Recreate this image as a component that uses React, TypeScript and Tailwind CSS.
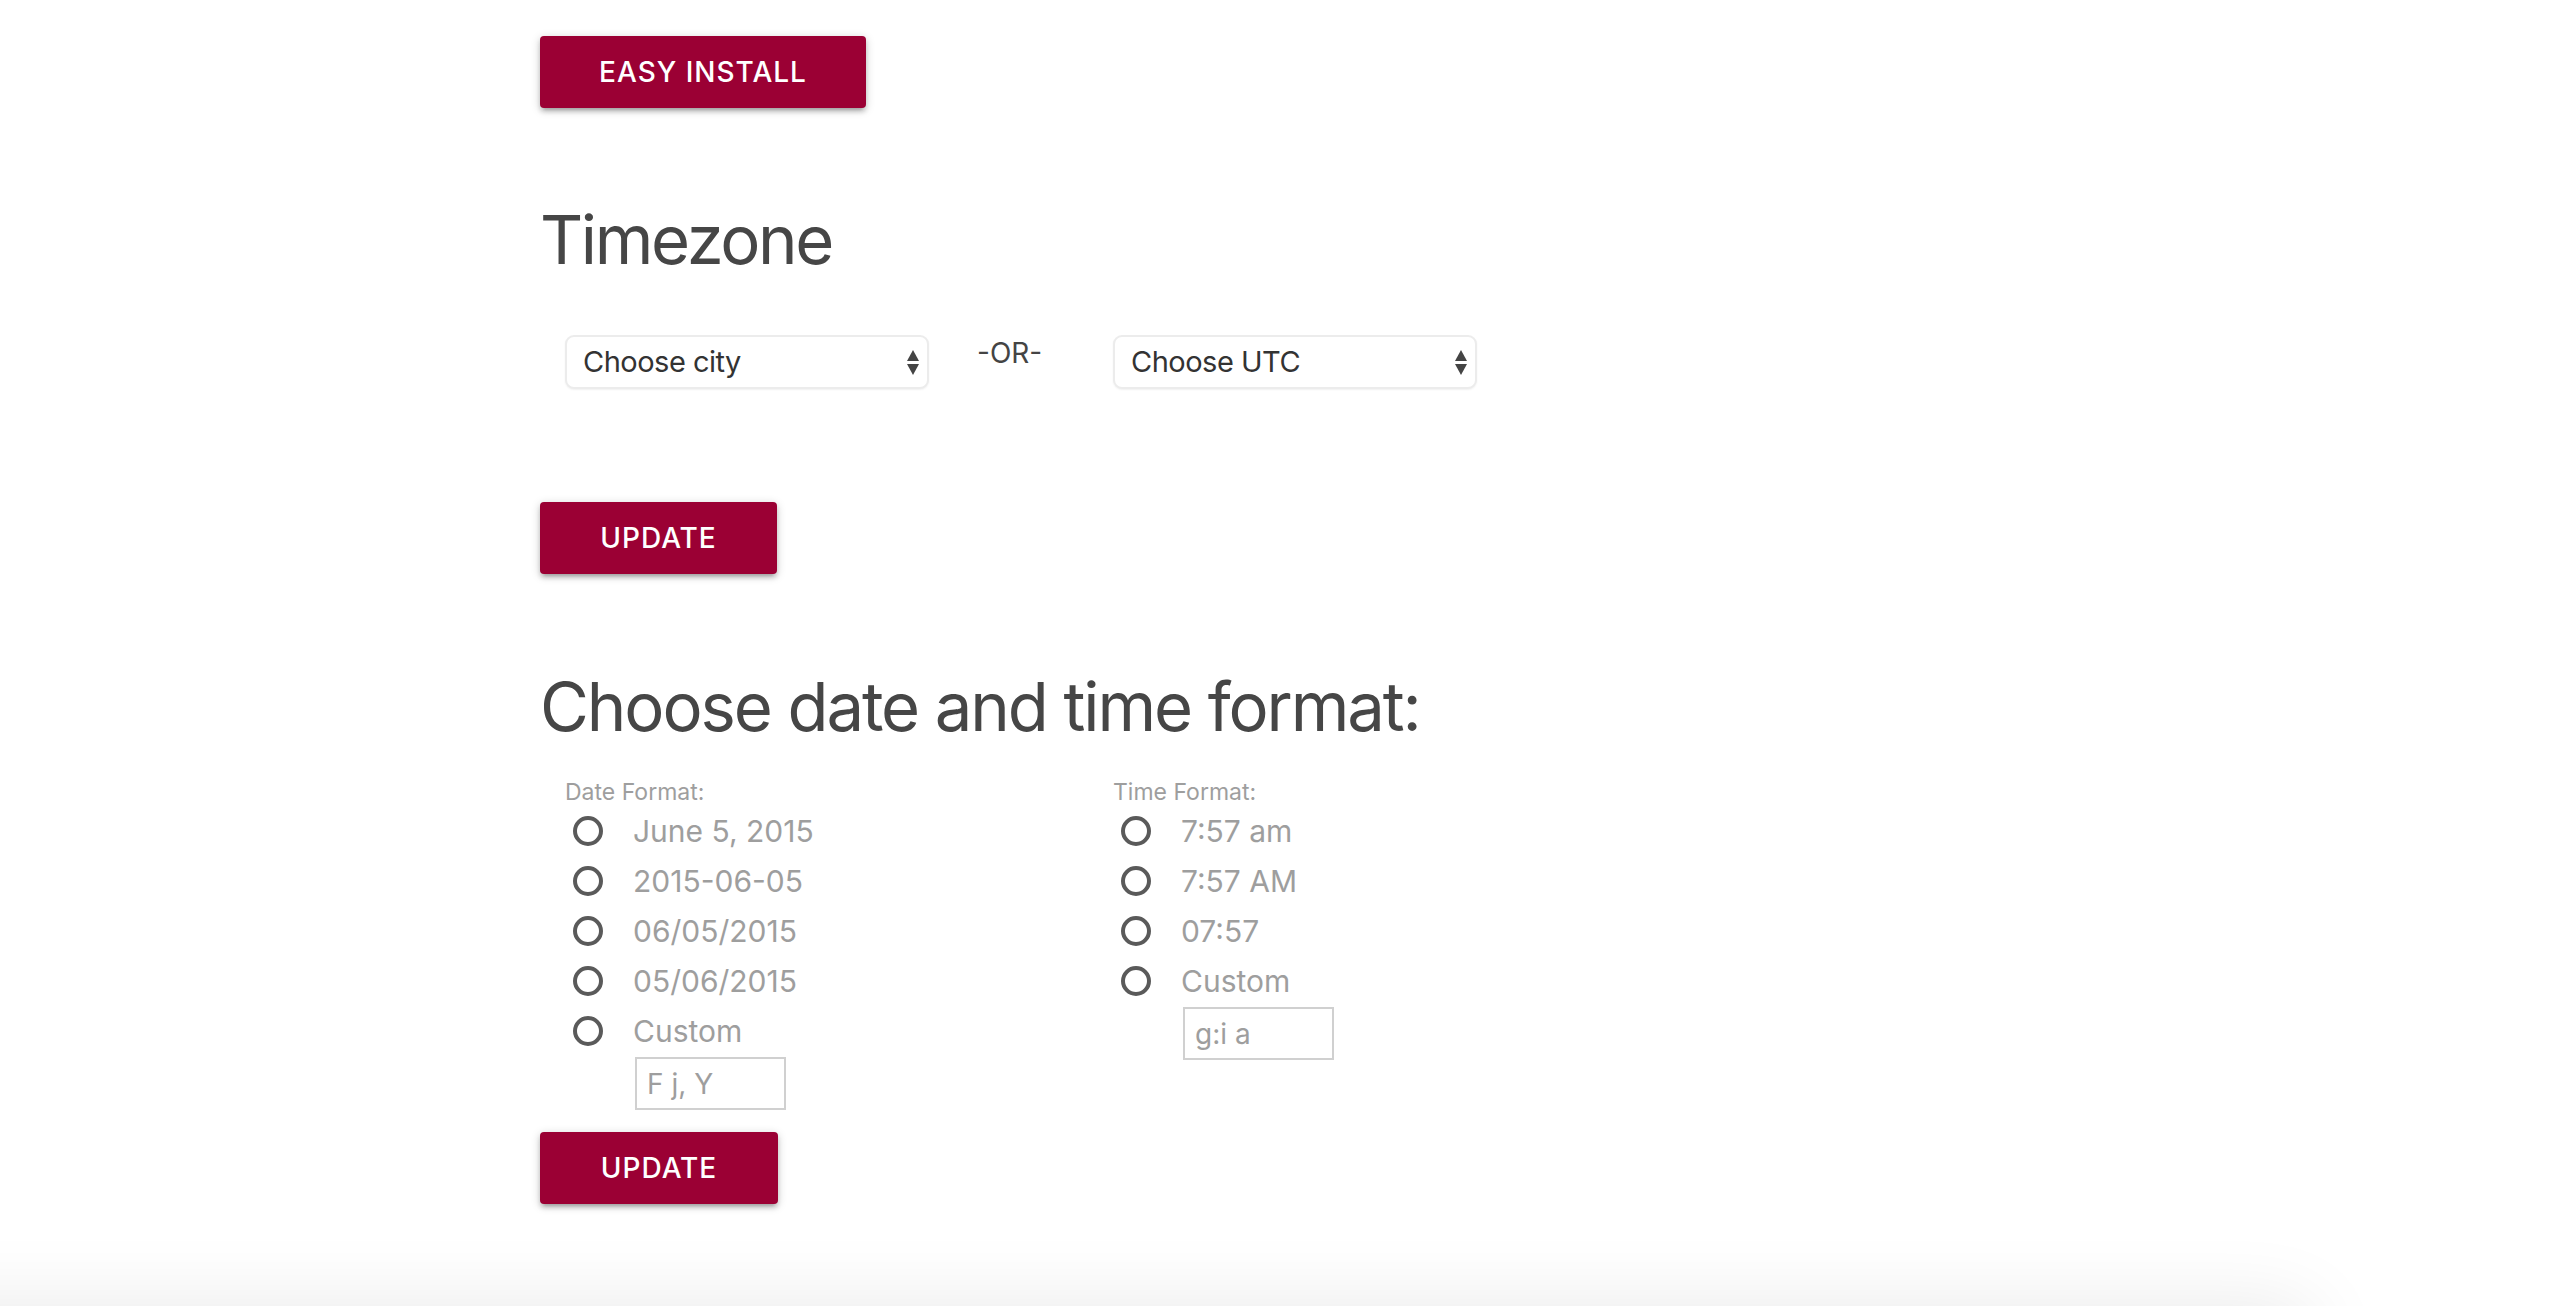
import React from "react";

function Arrows() {
  return (
    <svg width="12" height="25" viewBox="0 0 12 25" className="shrink-0">
      <polygon points="6,0 12,11 0,11" fill="#444" />
      <polygon points="0,14 12,14 6,25" fill="#444" />
    </svg>
  );
}

function FakeSelect({ label }: { label: string }) {
  return (
    <div className="flex h-[54px] w-[364px] items-center justify-between rounded-[9px] border-2 border-[#ececec] bg-white pl-[16px] pr-[8px] shadow-[0_1px_2px_rgba(0,0,0,0.06)]">
      <span className="text-[29px] leading-[36px] tracking-[-0.5px] text-[#333]">{label}</span>
      <Arrows />
    </div>
  );
}

function Radio({ label }: { label: string }) {
  return (
    <label className="flex h-[50px] items-center">
      <span className="ml-[8px] h-[30px] w-[30px] shrink-0 rounded-full border-[4px] border-[#5a5a5a]" />
      <span className="ml-[30px] text-[30px] leading-[50px] text-[#9e9e9e]">{label}</span>
    </label>
  );
}

function CustomInput({ value }: { value: string }) {
  return (
    <input
      readOnly
      defaultValue={value}
      className="ml-[70px] block h-[53px] w-[151px] border-2 border-[#d0d0d0] bg-white px-[10px] text-[28px] text-[#9e9e9e] outline-none"
    />
  );
}

export default function App() {
  const btn =
    "flex h-[72px] items-center justify-center rounded-[4px] bg-[#9b0034] text-[28px] font-medium tracking-[1px] text-white shadow-[0_4px_4px_0_rgba(0,0,0,0.14),0_6px_2px_-4px_rgba(0,0,0,0.12),0_2px_10px_0_rgba(0,0,0,0.2)]";
  return (
    <div className="h-[1306px] overflow-hidden bg-white font-['Inter',sans-serif]">
      <div className="h-[1306px] pl-[540px] pt-[36px]">
        <button className={btn + " w-[326px]"}>EASY INSTALL</button>

        <h2 className="mt-[92px] text-[67px] font-normal leading-[80px] tracking-[-2.4px] text-[#464646]">Timezone</h2>

        <div className="mt-[55px] flex h-[54px] items-start pl-[25px]">
          <FakeSelect label="Choose city" />
          <div className="mt-[1px] w-[184px] pl-[48px] text-[28px] leading-[34px] text-[#444]">-OR-</div>
          <FakeSelect label="Choose UTC" />
        </div>

        <button className={btn + " mt-[113px] w-[237px]"}>UPDATE</button>

        <h2 className="mt-[93px] text-[67px] font-normal leading-[80px] tracking-[-2.1px] text-[#464646]">
          Choose date and time format:
        </h2>

        <div className="mt-[33px] flex pl-[25px]">
          <div className="w-[548px]">
            <div className="text-[23px] leading-[24px] text-[#9e9e9e]">Date Format:</div>
            <div className="mt-[2px]">
              <Radio label="June 5, 2015" />
              <Radio label="2015-06-05" />
              <Radio label="06/05/2015" />
              <Radio label="05/06/2015" />
              <Radio label="Custom" />
            </div>
            <div className="mt-[1px]">
              <CustomInput value="F j, Y" />
            </div>
          </div>
          <div className="w-[548px]">
            <div className="text-[23px] leading-[24px] text-[#9e9e9e]">Time Format:</div>
            <div className="mt-[2px]">
              <Radio label="7:57 am" />
              <Radio label="7:57 AM" />
              <Radio label="07:57" />
              <Radio label="Custom" />
            </div>
            <div className="mt-[1px]">
              <CustomInput value="g:i a" />
            </div>
          </div>
        </div>

        <button className={btn + " mt-[22px] w-[238px]"}>UPDATE</button>
      </div>
      <div className="-ml-[100px] h-[100px] w-[2410px] bg-white shadow-[0_0_80px_rgba(0,0,0,0.09)]" />
    </div>
  );
}
